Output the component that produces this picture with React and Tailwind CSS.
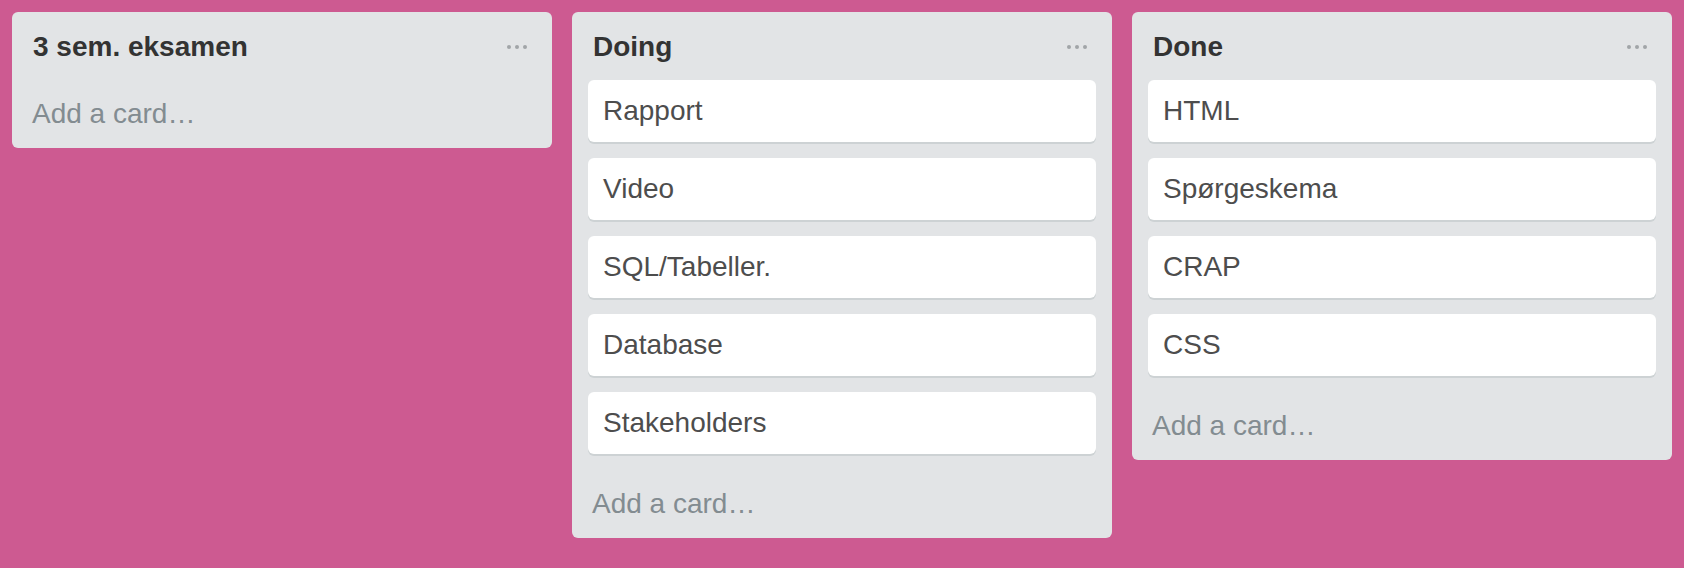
import React from 'react';

const lists = [
  { title: '3 sem. eksamen', cards: [] },
  { title: 'Doing', cards: ['Rapport', 'Video', 'SQL/Tabeller.', 'Database', 'Stakeholders'] },
  { title: 'Done', cards: ['HTML', 'Spørgeskema', 'CRAP', 'CSS'] },
];

const MenuDots = () => (
  <div className="flex items-center gap-[4px]">
    <span className="w-[4px] h-[4px] rounded-full bg-[#a1a5a8]" />
    <span className="w-[4px] h-[4px] rounded-full bg-[#a1a5a8]" />
    <span className="w-[4px] h-[4px] rounded-full bg-[#a1a5a8]" />
  </div>
);

const Card = ({ text }) => (
  <div className="h-[62px] mb-[16px] px-[15px] py-[11px] bg-white rounded-[6px] shadow-[0_2px_0_#cdd2d4] text-[28px] leading-[40px] text-[#4d4d4d]">
    {text}
  </div>
);

const List = ({ title, cards }) => (
  <div className="w-[540px] shrink-0 bg-[#e2e4e6] rounded-[6px]">
    {/* Header */}
    <div className="flex items-center justify-between pl-[21px] pr-[25px] pt-[15px] pb-[13px]">
      <h2 className="text-[28px] leading-[40px] font-bold text-[#333333]">{title}</h2>
      <MenuDots />
    </div>

    {/* Cards */}
    {cards.length > 0 && (
      <div className="px-[16px]">
        {cards.map((card) => (
          <Card key={card} text={card} />
        ))}
      </div>
    )}

    <div className="pl-[20px] pt-[14px] pb-[14px] text-[28px] leading-[40px] text-[#838c91]">
      Add a card…
    </div>
  </div>
);

export default function App() {
  return (
    <div
      className="min-h-screen bg-[#cd5a91] flex items-start gap-[20px] pl-[12px] pt-[12px]"
      style={{ fontFamily: '"Liberation Sans", Arial, sans-serif' }}
    >
      {lists.map((list) => (
        <List key={list.title} {...list} />
      ))}
    </div>
  );
}
